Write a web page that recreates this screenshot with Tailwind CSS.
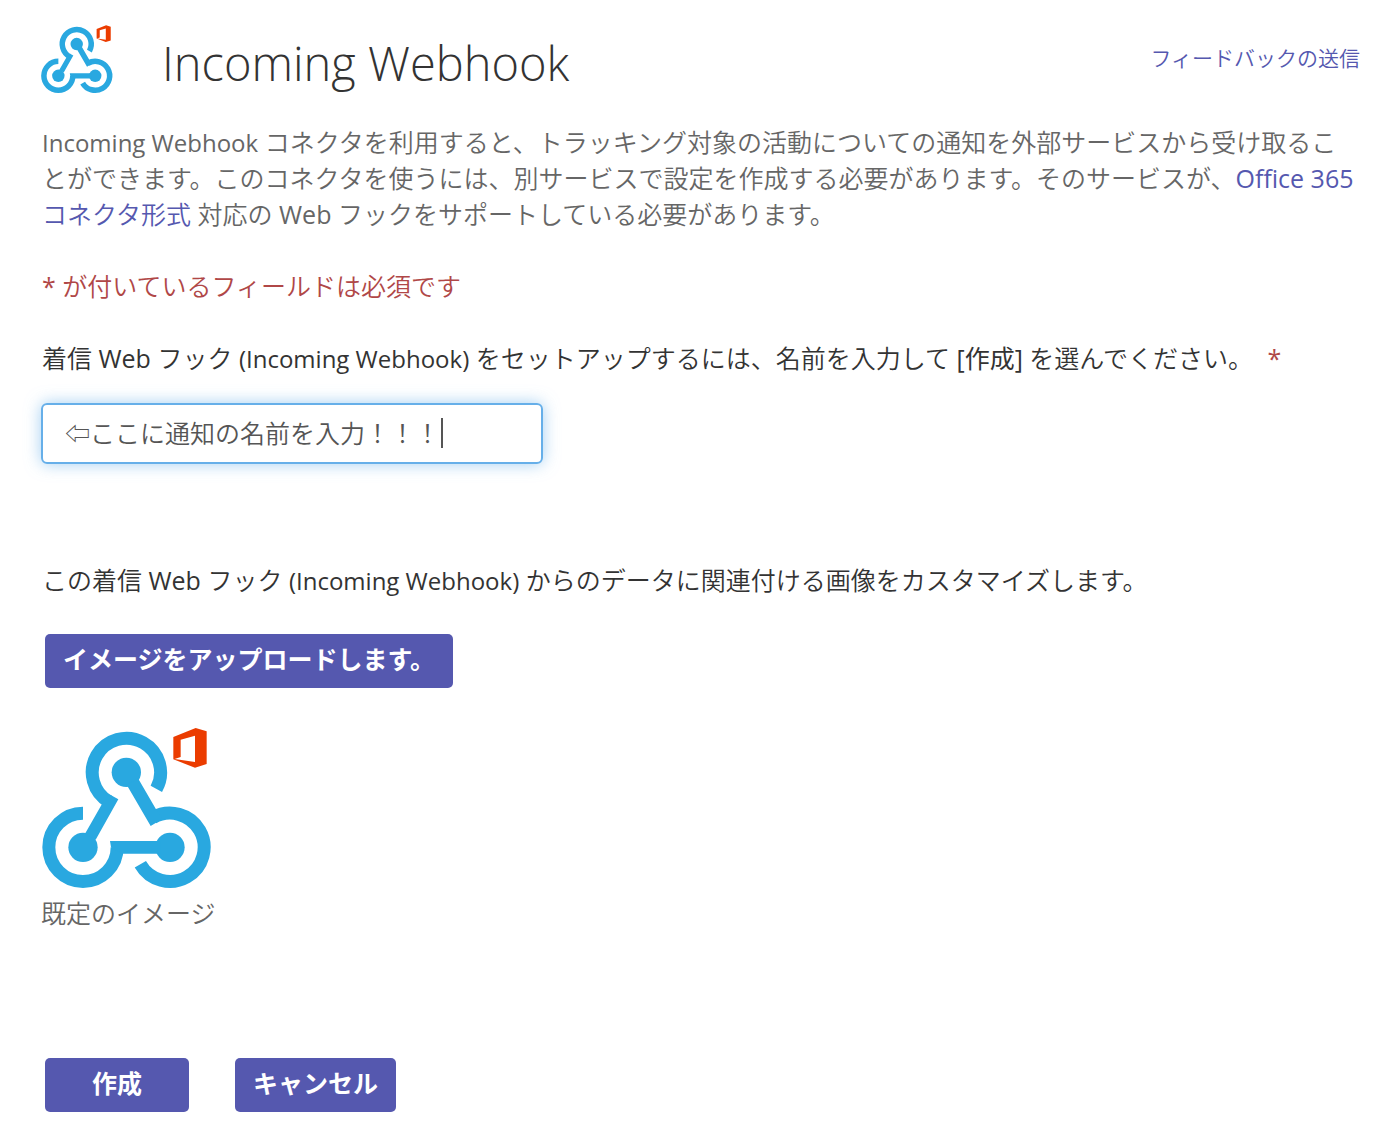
<!DOCTYPE html>
<html lang="ja">
<head>
<meta charset="utf-8">
<meta name="viewport" content="width=device-width, initial-scale=1">
<title>Incoming Webhook</title>
<script src="https://cdn.jsdelivr.net/npm/@tailwindcss/browser@4"></script>
</head>
<body class="bg-white font-['Open_Sans','Noto_Sans_CJK_JP',sans-serif] text-[25px] leading-9 font-[350] text-[#666]">
<svg class="hidden" aria-hidden="true">
  <symbol id="webhook" viewBox="36 30 516 510">
    <g fill="none" stroke="#29a8e0" stroke-width="39">
      <path d="M382 221.700A102.500 102.500 0 1 0 241 261"/>
      <path d="M162 294.500A102.500 102.500 0 1 0 264.500 397"/>
      <path d="M334 448A102.500 102.500 0 1 0 372 308"/>
    </g>
    <g fill="#29a8e0">
      <circle cx="292" cy="172" r="44"/><circle cx="162" cy="397" r="44"/><circle cx="423" cy="397" r="44"/>
      <path d="M168 356L222 262L245 240L268 253L200 374ZM243 378H395V416H280L246 397ZM293 209L327 190L381 283L400 312L365 333Z"/>
    </g>
    <path fill="#eb3c00" fill-rule="evenodd" d="M433 66L500 39L533 49V147L498 158L433 133ZM455 74V126L437 132L498 141V62Z"/>
  </symbol>
</svg>
<main class="px-10 pt-6 pb-7">
  <header class="flex items-start justify-between">
    <div class="flex items-center gap-12">
      <svg class="h-[72px] w-[74px]" role="img" aria-label="Webhook"><use href="#webhook"/></svg>
      <h1 class="pt-1.5 text-[47px] leading-[52px] font-light text-[#333]">Incoming Webhook</h1>
    </div>
    <a href="#" class="mt-4 text-[21px] text-[#5558af]">フィードバックの送信</a>
  </header>
  <p class="mt-7 px-[2px]"><span class="text-2xl leading-8 font-normal">Incoming Webhook</span> コネクタを利用すると、トラッキング対象の活動についての通知を外部サービスから受け取ることができます。このコネクタを使うには、別サービスで設定を作成する必要があります。そのサービスが、<a href="#" class="text-[#5558af]"><span class="font-normal">Office 365</span> コネクタ形式</a> 対応の <span class="font-normal">Web</span> フックをサポートしている必要があります。</p>
  <p class="mt-9 px-[2px] text-[#b04747]"><span class="font-normal">*</span> が付いているフィールドは必須です</p>
  <form class="mt-9 px-px">
    <label for="name" class="block px-px text-[#333]">着信 <span class="font-normal">Web</span> フック <span class="text-2xl leading-8 font-normal">(Incoming Webhook)</span> をセットアップするには、名前を入力して <span class="font-normal">[作成]</span> を選んでください。 <span class="ml-2 font-normal text-[#b04747]">*</span></label>
    <div class="relative mt-[27px] w-[502px]">
      <input id="name" type="text" value="⇦ここに通知の名前を入力！！！" class="block h-[61px] w-full rounded-md border-2 border-[#66afe9] px-[22px] pb-1 text-[#555] shadow-[0_0_16px_rgba(102,175,233,0.6)] outline-none">
      <span class="absolute top-[15px] left-[400px] h-[30px] w-[2px] bg-[#555]" aria-hidden="true"></span>
    </div>
    <p class="mt-[98px] px-px text-[#333]">この着信 <span class="font-normal">Web</span> フック <span class="text-2xl leading-8 font-normal">(Incoming Webhook)</span> からのデータに関連付ける画像をカスタマイズします。</p>
    <button type="button" class="mt-9 ml-1 block h-[54px] rounded-[5px] bg-[#5558af] px-[18px] pb-1 font-bold text-white">イメージをアップロードします。</button>
    <figure class="mt-[37px]">
      <svg class="h-[170px] w-[172px]" role="img" aria-label="既定のイメージ"><use href="#webhook"/></svg>
      <figcaption>既定のイメージ</figcaption>
    </figure>
    <div class="mt-[127px] ml-1 flex gap-[46px]">
      <button type="submit" class="h-[54px] w-36 rounded-[5px] bg-[#5558af] pb-1 font-bold text-white">作成</button>
      <button type="button" class="h-[54px] rounded-[5px] bg-[#5558af] px-[18px] pb-1 font-bold text-white">キャンセル</button>
    </div>
  </form>
</main>
</body>
</html>
